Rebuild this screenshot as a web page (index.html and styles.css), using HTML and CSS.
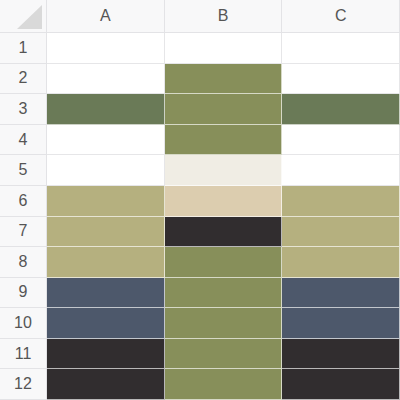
FILE: index.html
```html
<!DOCTYPE html>
<html>
<head>
<meta charset="utf-8">
<link rel="stylesheet" href="styles.css">
</head>
<body>
<div class="sheet">
  <div class="hd corner"><svg class="tri" width="26" height="24" viewBox="0 0 26 24"><polygon points="25,0 25,24 0,24" fill="#d9d9d9"/></svg></div>
  <div class="hd col">A</div>
  <div class="hd col">B</div>
  <div class="hd col">C</div>

  <div class="hd row">1</div>
  <div class="c"></div><div class="c"></div><div class="c"></div>

  <div class="hd row">2</div>
  <div class="c"></div><div class="c f olive"></div><div class="c"></div>

  <div class="hd row">3</div>
  <div class="c f green"></div><div class="c f olive"></div><div class="c f green"></div>

  <div class="hd row">4</div>
  <div class="c"></div><div class="c f olive"></div><div class="c"></div>

  <div class="hd row">5</div>
  <div class="c"></div><div class="c f cream"></div><div class="c"></div>

  <div class="hd row">6</div>
  <div class="c f khaki"></div><div class="c f beige"></div><div class="c f khaki"></div>

  <div class="hd row">7</div>
  <div class="c f khaki"></div><div class="c f dark"></div><div class="c f khaki"></div>

  <div class="hd row">8</div>
  <div class="c f khaki"></div><div class="c f olive"></div><div class="c f khaki"></div>

  <div class="hd row">9</div>
  <div class="c f slate"></div><div class="c f olive"></div><div class="c f slate"></div>

  <div class="hd row">10</div>
  <div class="c f slate"></div><div class="c f olive"></div><div class="c f slate"></div>

  <div class="hd row">11</div>
  <div class="c f dark"></div><div class="c f olive"></div><div class="c f dark"></div>

  <div class="hd row">12</div>
  <div class="c f dark"></div><div class="c f olive"></div><div class="c f dark"></div>
</div>
</body>
</html>
```
FILE: styles.css
```css
html, body {
  margin: 0;
  padding: 0;
  background: #ffffff;
}
.sheet {
  width: 400px;
  height: 400px;
  display: grid;
  grid-template-columns: 47px 1fr 1fr 1fr;
  grid-template-rows: 33px repeat(12, 1fr);
  font-family: "Liberation Sans", Arial, sans-serif;
  overflow: hidden;
}
.hd {
  background: #f8f8f9;
  color: #555555;
  font-size: 16px;
  display: flex;
  align-items: center;
  justify-content: center;
  border-right: 1px solid #e3e3e6;
  border-bottom: 1px solid #e3e3e6;
  box-sizing: border-box;
}
.corner {
  align-items: flex-end;
  justify-content: flex-end;
  padding: 0 3px 3px 0;
}
.tri { display: block; }
.c {
  background: #ffffff;
  border-right: 1px solid #e6e6e8;
  border-bottom: 1px solid #e6e6e8;
  box-sizing: border-box;
}
.c.f {
  border-color: rgba(255, 255, 255, 0.66);
}
.olive { background: #878f5a; }
.green { background: #6a7a57; }
.cream { background: #f0ede4; }
.khaki { background: #b5b07f; }
.beige { background: #dccdaf; }
.dark  { background: #312d2f; }
.slate { background: #4d586b; }
```
